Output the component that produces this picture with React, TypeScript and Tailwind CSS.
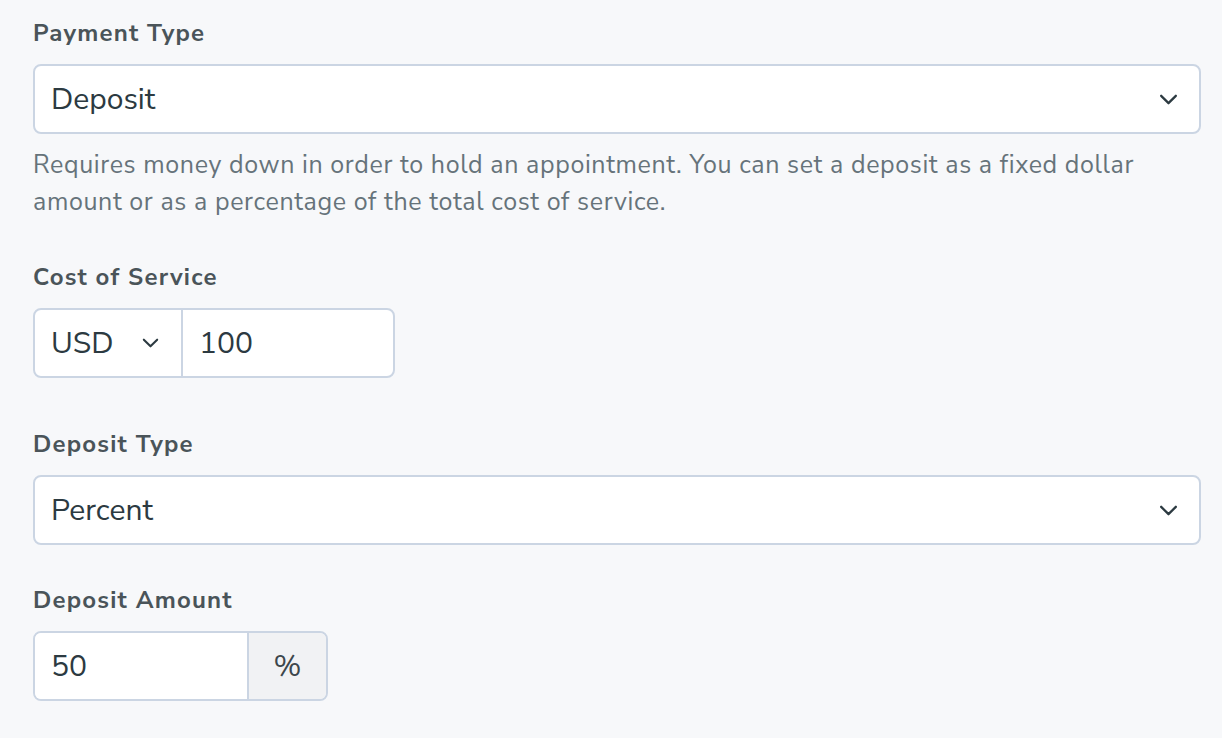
function Chevron({ className }: { className?: string }) {
  return (
    <svg
      className={className}
      viewBox="0 0 20 12"
      fill="none"
      stroke="currentColor"
      strokeWidth="2.5"
      strokeLinecap="round"
      strokeLinejoin="round"
    >
      <path d="M2 2l8 8 8-8" />
    </svg>
  );
}

function Label({ children }: { children: string }) {
  return (
    <p className="text-[24px] font-bold leading-[32px] tracking-[0.05em] text-[#4a5459]">
      {children}
    </p>
  );
}

function Select({ value }: { value: string }) {
  return (
    <div className="mt-[15px] flex h-[70px] items-center justify-between rounded-lg border-2 border-[#cbd5e3] bg-white pl-4 pr-[21px]">
      <span className="text-[30px] text-[#2c3a41]">{value}</span>
      <Chevron className="h-[11px] w-[19px] text-[#2c3a41]" />
    </div>
  );
}

export default function App() {
  return (
    <div
      className="min-h-[738px] bg-[#f7f8fa] pl-[33px] pr-[21px] pt-[17px]"
      style={{ fontFamily: '"Nunito Sans", Lato, "Noto Sans", sans-serif' }}
    >
      <Label>Payment Type</Label>
      <Select value="Deposit" />
      <p className="mt-[13px] max-w-[1110px] text-[25px] leading-[37px] tracking-[0.025em] text-[#66737a]">
        Requires money down in order to hold an appointment. You can set a deposit as a fixed
        dollar amount or as a percentage of the total cost of service.
      </p>

      <div className="mt-[40px]">
        <Label>Cost of Service</Label>
        <div className="mt-[15px] flex h-[70px] w-[362px] overflow-hidden rounded-lg border-2 border-[#cbd5e3] bg-white">
          <div className="flex w-[148px] items-center justify-between border-r-2 border-[#cbd5e3] pl-4 pr-[22px]">
            <span className="text-[30px] text-[#2c3a41]">USD</span>
            <Chevron className="h-[10px] w-[17px] text-[#2c3a41]" />
          </div>
          <div className="flex flex-1 items-center pl-4">
            <span className="text-[30px] text-[#2c3a41]">100</span>
          </div>
        </div>
      </div>

      <div className="mt-[50px]">
        <Label>Deposit Type</Label>
        <Select value="Percent" />
      </div>

      <div className="mt-[39px]">
        <Label>Deposit Amount</Label>
        <div className="mt-[15px] flex h-[70px] w-[295px] overflow-hidden rounded-lg border-2 border-[#cbd5e3]">
          <div className="flex w-[214px] items-center border-r-2 border-[#cbd5e3] bg-white pl-4">
            <span className="text-[30px] text-[#2c3a41]">50</span>
          </div>
          <div className="flex flex-1 items-center justify-center bg-[#f1f2f4]">
            <span className="text-[30px] text-[#3d474c]">%</span>
          </div>
        </div>
      </div>
    </div>
  );
}
